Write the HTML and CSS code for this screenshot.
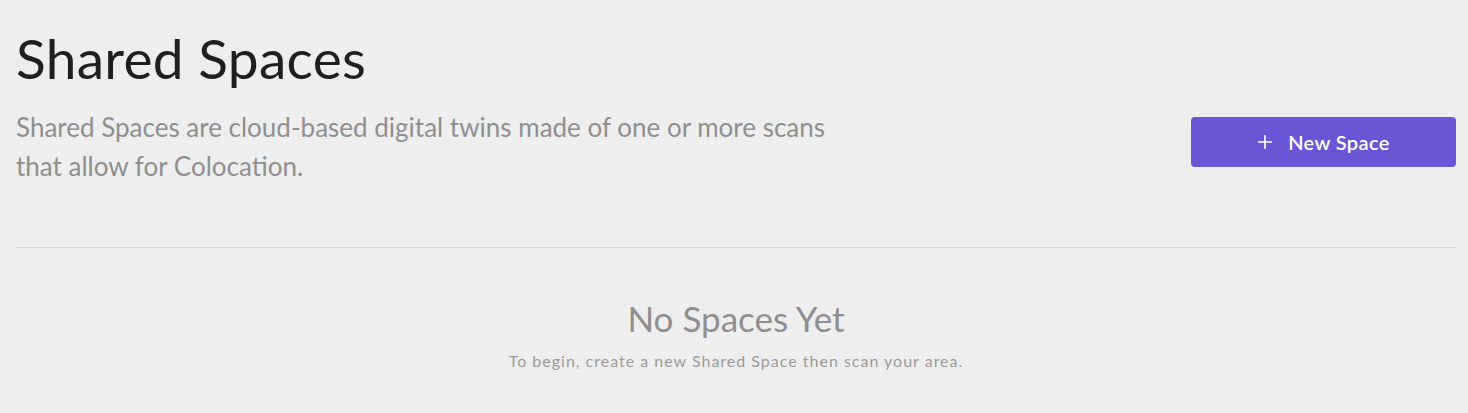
FILE: index.html
```html
<!DOCTYPE html>
<html lang="en">
<head>
<meta charset="utf-8">
<title>Shared Spaces</title>
<link rel="stylesheet" href="styles.css">
</head>
<body>
<main class="page">
  <header class="header">
    <h1 class="title">Shared Spaces</h1>
    <div class="header-row">
      <p class="desc">Shared Spaces are cloud-based digital twins made of one or more scans that allow for Colocation.</p>
      <button class="btn-new" type="button">
        <svg class="plus" width="16" height="16" viewBox="0 0 16 16" aria-hidden="true"><path d="M8 1v14M1 8h14" stroke="#fff" stroke-width="1.6" fill="none"/></svg>
        <span>New Space</span>
      </button>
    </div>
  </header>
  <hr class="divider">
  <section class="empty">
    <h2 class="empty-title">No Spaces Yet</h2>
    <p class="empty-text">To begin, create a new Shared Space then scan your area.</p>
  </section>
</main>
</body>
</html>
```

FILE: styles.css
```css
html, body {
  margin: 0;
  padding: 0;
  background: #eeeeee;
}
body {
  font-family: Lato, "Liberation Sans", sans-serif;
}
.page {
  padding: 0 12px 0 16px;
}
.title {
  margin: 0;
  padding-top: 26px;
  font-size: 55px;
  line-height: 64px;
  font-weight: 400;
  color: #1f1f1f;
  letter-spacing: 0.3px;
}
.header-row {
  display: flex;
  justify-content: space-between;
  align-items: flex-start;
  margin-top: 18px;
}
.desc {
  margin: 0;
  max-width: 820px;
  font-size: 26px;
  line-height: 39px;
  color: #8f8f8f;
}
.btn-new {
  margin-top: 9px;
  width: 265px;
  height: 50px;
  display: flex;
  align-items: center;
  justify-content: center;
  gap: 15px;
  background: #6a55d6;
  color: #fff;
  border: 0;
  border-radius: 4px;
  font-family: inherit;
  font-size: 20px;
  font-weight: 600;
  letter-spacing: 0.4px;
  cursor: pointer;
}
.plus {
  display: block;
}
.divider {
  margin: 61px 0 0;
  border: 0;
  border-top: 1px solid #d6d6d6;
}
.empty {
  text-align: center;
  padding-top: 50px;
}
.empty-title {
  margin: 0;
  font-size: 35px;
  line-height: 40px;
  font-weight: 400;
  color: #8f8f8f;
}
.empty-text {
  margin: 13px 0 0;
  font-size: 16px;
  line-height: 20px;
  letter-spacing: 1px;
  color: #9a9a9a;
}
```
